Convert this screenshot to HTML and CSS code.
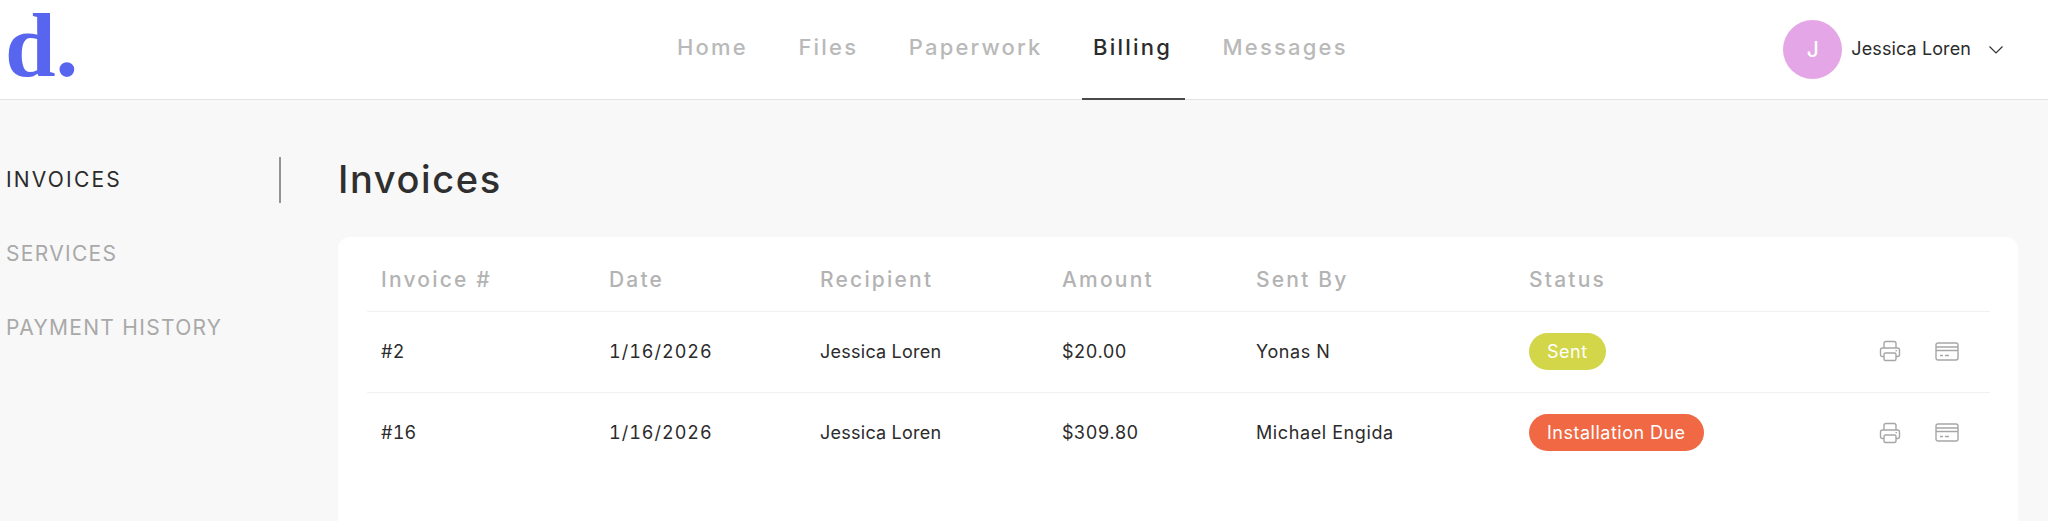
FILE: index.html
```html
<!DOCTYPE html>
<html lang="en">

<head>
    <meta charset="UTF-8">
    <title>Invoices</title>
    <link rel="stylesheet" href="styles.css">
</head>

<body>
    <header class="topbar">
        <div class="logo">d.</div>
        <nav class="main-nav">
            <a class="nav-link">Home</a>
            <a class="nav-link">Files</a>
            <a class="nav-link">Paperwork</a>
            <a class="nav-link active">Billing</a>
            <a class="nav-link">Messages</a>
        </nav>
        <div class="user-menu">
            <div class="avatar">J</div>
            <span class="user-name">Jessica Loren</span>
            <svg class="chevron" width="14" height="8" viewBox="0 0 14 8" fill="none" stroke="#333" stroke-width="1.2">
                <path d="M0.5 0.5 L7 7 L13.5 0.5" />
            </svg>
        </div>
    </header>

    <div class="page">
        <aside class="sidebar">
            <a class="side-link active">INVOICES</a>
            <a class="side-link">SERVICES</a>
            <a class="side-link">PAYMENT HISTORY</a>
        </aside>

        <main class="content">
            <h1 class="page-title">Invoices</h1>
            <section class="card">
                <div class="row head-row">
                    <div>Invoice #</div>
                    <div>Date</div>
                    <div>Recipient</div>
                    <div>Amount</div>
                    <div>Sent By</div>
                    <div>Status</div>
                </div>

                <div class="row">
                    <div>#2</div>
                    <div class="date">1/16/2026</div>
                    <div>Jessica Loren</div>
                    <div>$20.00</div>
                    <div class="sender">Yonas N</div>
                    <div class="status-cell">
                        <span class="pill pill-sent">Sent</span>
                        <div class="actions">
                            <svg class="icon" width="22" height="22" viewBox="0 0 22 22" fill="none" stroke="#a6a6a6" stroke-width="1.4">
                                <path d="M5 8 V3.5 Q5 1.5 7 1.5 H15 Q17 1.5 17 3.5 V8" />
                                <path d="M5 16.5 H3.5 Q1.5 16.5 1.5 14.5 V10 Q1.5 8 3.5 8 H18.5 Q20.5 8 20.5 10 V14.5 Q20.5 16.5 18.5 16.5 H17" />
                                <rect x="5" y="13" width="12" height="7.5" rx="1.5" />
                                <path d="M16.5 10.6 H18" />
                            </svg>
                            <svg class="icon" width="24" height="19" viewBox="0 0 24 19" fill="none" stroke="#a6a6a6" stroke-width="1.4">
                                <rect x="1" y="1" width="22" height="17" rx="2" />
                                <path d="M1 5 H23 M1 8.5 H23" />
                                <path d="M5 13.5 H8 M10 13.5 H14" />
                            </svg>
                        </div>
                    </div>
                </div>

                <div class="row">
                    <div>#16</div>
                    <div class="date">1/16/2026</div>
                    <div>Jessica Loren</div>
                    <div>$309.80</div>
                    <div class="sender">Michael Engida</div>
                    <div class="status-cell">
                        <span class="pill pill-due">Installation Due</span>
                        <div class="actions">
                            <svg class="icon" width="22" height="22" viewBox="0 0 22 22" fill="none" stroke="#a6a6a6" stroke-width="1.4">
                                <path d="M5 8 V3.5 Q5 1.5 7 1.5 H15 Q17 1.5 17 3.5 V8" />
                                <path d="M5 16.5 H3.5 Q1.5 16.5 1.5 14.5 V10 Q1.5 8 3.5 8 H18.5 Q20.5 8 20.5 10 V14.5 Q20.5 16.5 18.5 16.5 H17" />
                                <rect x="5" y="13" width="12" height="7.5" rx="1.5" />
                                <path d="M16.5 10.6 H18" />
                            </svg>
                            <svg class="icon" width="24" height="19" viewBox="0 0 24 19" fill="none" stroke="#a6a6a6" stroke-width="1.4">
                                <rect x="1" y="1" width="22" height="17" rx="2" />
                                <path d="M1 5 H23 M1 8.5 H23" />
                                <path d="M5 13.5 H8 M10 13.5 H14" />
                            </svg>
                        </div>
                    </div>
                </div>
            </section>
        </main>
    </div>
</body>

</html>
```

FILE: styles.css
```css
html,
body {
    height: 521px;
    overflow: hidden;
}

body {
    margin: 0;
    background-color: #f8f8f8;
    font-family: "Inter", "Liberation Sans", sans-serif;
    color: #2b2b2b;
}

.topbar {
    display: flex;
    align-items: center;
    height: 99px;
    background-color: #fff;
    border-bottom: 1px solid #e3e3e3;
}

.logo {
    width: 677px;
    box-sizing: border-box;
    padding: 0 0 7px 5px;
    font-family: "Liberation Serif", serif;
    font-weight: bold;
    font-size: 91px;
    line-height: 92px;
    color: #5865ee;
}

.main-nav {
    display: flex;
    align-self: stretch;
    gap: 50.5px;
}

.nav-link {
    position: relative;
    display: flex;
    align-items: center;
    padding-bottom: 5px;
    font-size: 22px;
    font-weight: 500;
    letter-spacing: 2.2px;
    color: #b9b9b9;
}

.nav-link.active {
    color: #2b2b2b;
}

.nav-link.active::after {
    content: "";
    position: absolute;
    left: -11px;
    right: -13px;
    bottom: -1px;
    height: 2px;
    background-color: #4a4a4a;
}

.user-menu {
    display: flex;
    align-items: center;
    margin-left: auto;
    padding-right: 45px;
}

.avatar {
    display: flex;
    align-items: center;
    justify-content: center;
    width: 59px;
    height: 59px;
    border-radius: 50%;
    background-color: #e4a6e6;
    color: #fff;
    font-size: 21px;
    font-weight: 500;
}

.user-name {
    margin: 0 0 2px 9px;
    font-size: 18px;
    letter-spacing: 0.1px;
}

.chevron {
    margin-left: 18px;
}

.page {
    display: flex;
}

.sidebar {
    width: 281px;
    padding-top: 57px;
    display: flex;
    flex-direction: column;
    gap: 28px;
}

.side-link {
    height: 46px;
    line-height: 46px;
    padding-left: 6px;
    font-size: 21px;
    letter-spacing: 1.3px;
    color: #a9a9a9;
}

.side-link.active {
    letter-spacing: 2.2px;
    color: #2b2b2b;
    border-right: 2px solid #949494;
}

.content {
    flex: 1;
    padding: 57px 30px 0 57px;
}

.page-title {
    margin: 0 0 34px;
    height: 46px;
    line-height: 44px;
    font-size: 38px;
    font-weight: 500;
    letter-spacing: 1.6px;
    color: #2f2f2f;
}

.card {
    height: 284px;
    box-sizing: border-box;
    padding: 0 28px 0 29px;
    background-color: #fff;
    border-radius: 12px 12px 0 0;
}

.row {
    display: grid;
    grid-template-columns: 228px 211px 242px 194px 273px 1fr;
    align-items: center;
    height: 81px;
    padding: 0 0 2px 14px;
    box-sizing: border-box;
    border-bottom: 1px solid #f1f1f1;
    font-size: 18px;
    letter-spacing: 0.25px;
    font-variant-numeric: tabular-nums;
}

.row:last-child {
    border-bottom: none;
}

.head-row {
    height: 75px;
    padding: 10px 0 0 14px;
    font-size: 21px;
    font-weight: 500;
    letter-spacing: 2.2px;
    color: #b3b3b3;
}

.date {
    letter-spacing: 1px;
}

.sender {
    letter-spacing: 0.6px;
}

.status-cell {
    display: flex;
    align-items: center;
}

.pill {
    display: inline-block;
    height: 37px;
    line-height: 37px;
    padding: 0 18px;
    border-radius: 19px;
    letter-spacing: 0.5px;
    color: #fff;
}

.pill-sent {
    background-color: #d2d648;
}

.pill-due {
    background-color: #f06844;
}

.actions {
    display: flex;
    align-items: center;
    gap: 34px;
    margin-left: auto;
    padding-right: 31px;
}
```
